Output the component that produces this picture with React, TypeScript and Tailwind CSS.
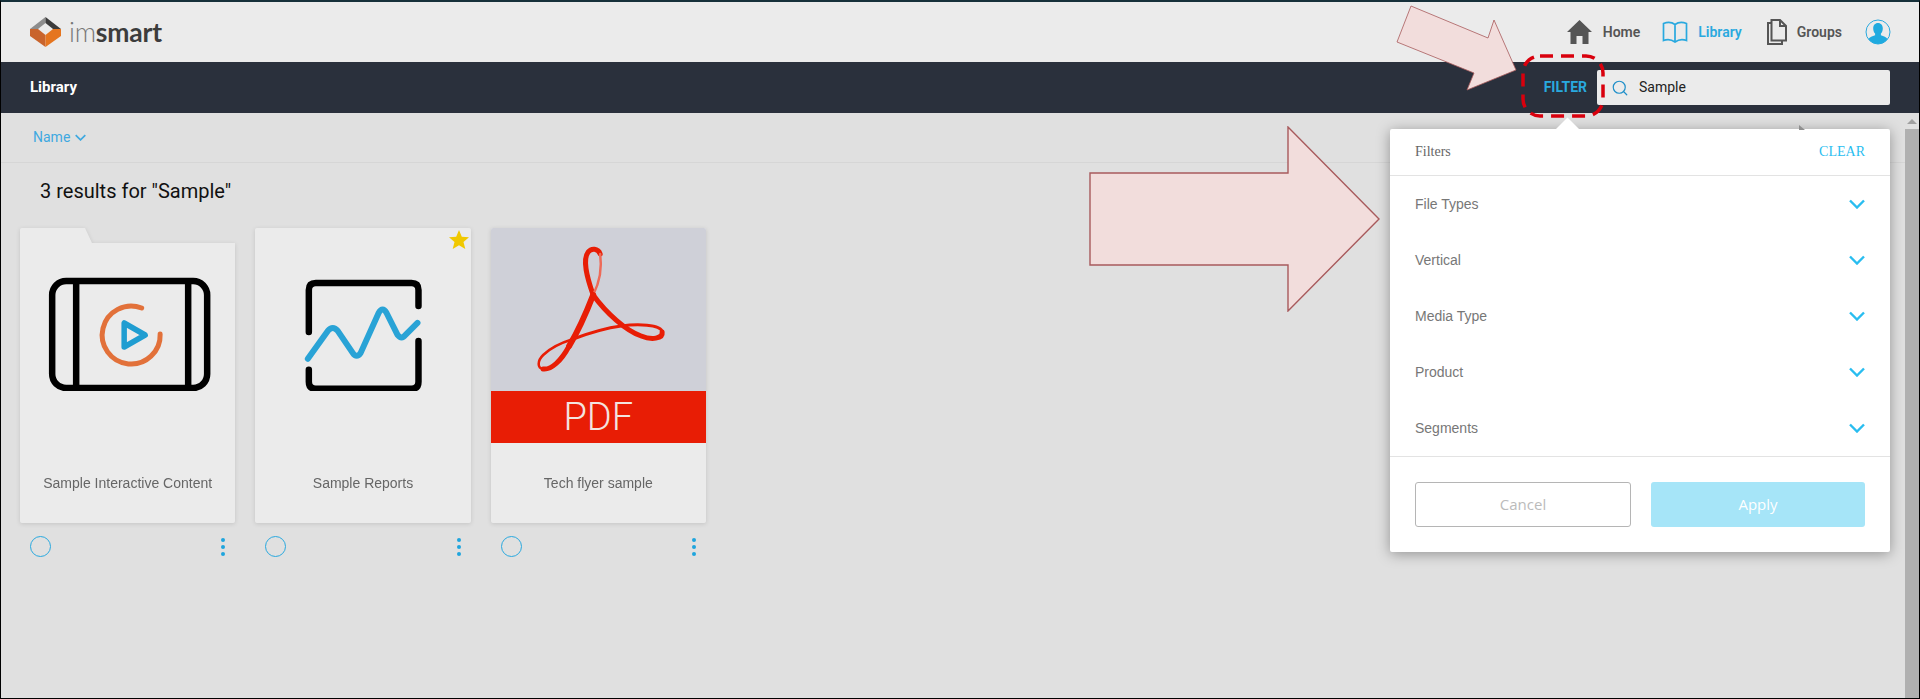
import { Search } from "lucide-react";

const filterRows = ["File Types", "Vertical", "Media Type", "Product", "Segments"];

function Chevron({ className }: { className: string }) {
  return (
    <svg viewBox="0 0 16 10" className={className} fill="none" stroke="currentColor" strokeWidth="2.4">
      <path d="M1 1.5l7 7 7-7" />
    </svg>
  );
}

function Logo() {
  return (
    <div className="flex items-center gap-[8px]">
      <svg viewBox="0 0 31 30" className="h-[30px] w-[31px]">
        <path d="M0 12 15.5 0v6L8 12l-8 0z" fill="#8d8d8d" />
        <path d="M31 12 15.5 0v6L23 12z" fill="#3b3b3b" />
        <path d="M0 12 8 12 15.5 18v12L0 19z" fill="#c9642c" />
        <path d="M31 12 23 12 15.5 18v12L31 19z" fill="#e5751f" />
      </svg>
      <div className="font-['Lato',sans-serif] text-[26.5px] leading-none tracking-[-0.2px] text-[#3c3c3c]">
        <span className="font-light text-[#777]">im</span>
        <span className="font-bold">smart</span>
      </div>
    </div>
  );
}

function NavBar() {
  return (
    <div className="flex h-[60px] items-center justify-between bg-[#ebebeb] pl-[29px] pr-[28px]">
      <Logo />
      <nav className="flex items-center font-['Roboto',sans-serif] text-[14px] font-semibold text-[#555]">
        <svg viewBox="0 0 25 24" className="h-[24px] w-[25px]" fill="#555">
          <path d="M12.5 0 25 12h-3.500v12h-6v-8h-6v8h-6V12H0z" />
        </svg>
        <span className="ml-[11px]">Home</span>
        <svg viewBox="0 0 25 22" className="ml-[22px] h-[22px] w-[26px]" fill="none" stroke="#29a9df" strokeWidth="1.700">
          <path d="M1 2.500C5 1 9 1 12.500 3.500 16 1 20 1 24 2.500v17c-4-1.500-8-1-11.500 1.500C9 18.500 5 18 1 19.500zM12.500 3.500v17.500" />
        </svg>
        <span className="ml-[10px] text-[#29a9df]">Library</span>
        <svg viewBox="0 0 20 26" className="ml-[25px] h-[26px] w-[20px]" fill="none" stroke="#555" strokeWidth="2">
          <path d="M4.500 1h8.500l6 6v14.500h-14.500zM13 1v6h6M4.500 4H1v21h14v-3.500" />
        </svg>
        <span className="ml-[10px]">Groups</span>
        <svg viewBox="0 0 26 26" className="ml-[23px] h-[26px] w-[26px]">
          <circle cx="13" cy="13" r="12" fill="none" stroke="#29a9df" strokeWidth="1" />
          <path d="M13 4c3 0 4.800 2.400 4.800 5.400 0 2.200-.8 4-1.900 5.100v1.800c2.800 1 5.500 2 6.600 3.800A12 12 0 0 1 13 25a12 12 0 0 1-9.500-4.900c1.100-1.800 3.800-2.800 6.600-3.800v-1.800C9 13.400 8.200 11.600 8.200 9.400 8.200 6.400 10 4 13 4z" fill="#1faadf" />
        </svg>
      </nav>
    </div>
  );
}

function LibraryBar() {
  return (
    <div className="flex h-[51px] items-center justify-between bg-[#2a303c] pl-[29px] pr-[29px] font-['Roboto',sans-serif] text-[14px]">
      <span className="text-[15px] font-bold text-white">Library</span>
      <div className="flex items-center">
        <span className="font-bold text-[#29a9df]">FILTER</span>
        <div className="ml-[10px] flex h-[35px] w-[293px] items-center rounded-[2px] bg-[#ebebeb] pl-[14px] text-[#222]">
          <Search size={18} strokeWidth={1.600} className="text-[#1e8fc9]" />
          <span className="ml-[10px]">Sample</span>
        </div>
      </div>
    </div>
  );
}

function InteractiveIcon() {
  return (
    <svg viewBox="0 0 215 163" className="h-[163px] w-full" fill="none">
      <rect x="32" y="53" width="155" height="107" rx="14" stroke="#000" strokeWidth="6.500" />
      <path d="M56 50v113M168 50v113" stroke="#000" strokeWidth="6.500" />
      <path d="M121.500 80A29 29 0 1 0 140 106" stroke="#e2713a" strokeWidth="5" strokeLinecap="round" />
      <path d="M104 95v24l21-12z" stroke="#1f9dd1" strokeWidth="5.500" strokeLinejoin="round" />
    </svg>
  );
}

function ReportsIcon() {
  return (
    <svg viewBox="0 0 216 163" className="h-[163px] w-full" fill="none" strokeLinecap="round" strokeLinejoin="round">
      <path d="M54 104V62q0-7 7-7h96q7 0 7 7v16M164 113v41q0 7-7 7H61q-7 0-7-7v-12" stroke="#000" strokeWidth="6.500" />
      <path d="M53 131l20-28q5-6 10 0l15 22q4 6 8 0l18-40q4-7 8 0l11 22q4 5 8 0l12-12" stroke="#29a3d6" strokeWidth="6" />
    </svg>
  );
}

function PdfThumb() {
  return (
    <div>
      <svg viewBox="0 0 215 163" className="h-[163px] w-full bg-[#cfd0d8]" fill="none" stroke="#e81d05" strokeLinecap="round">
        <path d="M102 67C96 50 91 32 97 24c3-4 10-4 12 2" strokeWidth="5" />
        <path d="M109 26c2 14-1 29-7 41" strokeWidth="2.500" stroke="#ee6a58" />
        <path d="M102 67c-7 18-15 36-24 51" strokeWidth="6" />
        <path d="M78 118c-8 15-18 24-26 23" strokeWidth="5" />
        <path d="M52 141c-6-1-6-8 0-14 6-6 14-11 30-16" strokeWidth="2.500" />
        <path d="M82 111c16-6 33-11 48-13 15-2 40-2 41 6" strokeWidth="3" />
        <path d="M171 104c1 7-11 8-21 4-15-5-35-23-48-41" strokeWidth="5" />
      </svg>
      <div className="flex h-[52px] items-center justify-center bg-[#e81d05] font-['Roboto',sans-serif] text-[38px] leading-none font-light text-[#f3e4e0]">
        PDF
      </div>
    </div>
  );
}

function Card({ label, folder, star, children }: { label: string; folder?: boolean; star?: boolean; children: React.ReactNode }) {
  return (
    <div className="w-[215.330px]">
      <div className="drop-shadow-[0_1px_2px_rgba(0,0,0,0.12)]">
        <div
          className={
            folder
              ? "relative h-[295px] overflow-hidden rounded-[2px] bg-[#ebebeb] [clip-path:polygon(0_0,65px_0,72px_15px,100%_15px,100%_100%,0_100%)]"
              : "relative h-[295px] overflow-hidden rounded-[2px] bg-[#ebebeb]"
          }
        >
          {children}
          {star && (
            <svg viewBox="0 0 20 20" className="absolute top-[2px] right-[2px] h-[20px] w-[20px]" fill="#f0c800">
              <path d="M10 0l2.800 6.800 7.200.5-5.500 4.700 1.800 7L10 15.200 3.700 19l1.800-7L0 7.300l7.200-.5z" />
            </svg>
          )}
          <div className="absolute inset-x-0 top-[247px] text-center font-['Liberation_Sans',sans-serif] text-[14px] leading-4 text-[#666]">
            {label}
          </div>
        </div>
      </div>
      <div className="mt-[13px] flex items-center justify-between pr-[10px] pl-[10px]">
        <div className="h-[21px] w-[21px] rounded-full border border-[#29a9df]" />
        <div className="flex flex-col gap-[3px]">
          <div className="h-[4px] w-[4px] rounded-full bg-[#1fa5dd]" />
          <div className="h-[4px] w-[4px] rounded-full bg-[#1fa5dd]" />
          <div className="h-[4px] w-[4px] rounded-full bg-[#1fa5dd]" />
        </div>
      </div>
    </div>
  );
}

function FilterPanel() {
  return (
    <div className="absolute top-[127px] left-[1389px] w-[500px] rounded-[2px] bg-white shadow-[0_2px_14px_rgba(0,0,0,0.35)]">
      <div className="absolute -top-[8px] left-[169px] h-[17px] w-[17px] rotate-45 bg-white" />
      <div className="relative flex h-[47px] items-center justify-between border-b border-[#e3e3e3] px-[25px] pb-[2px] font-['Liberation_Serif',serif] text-[14px]">
        <span className="text-[#666]">Filters</span>
        <span className="text-[#29bdf0]">CLEAR</span>
      </div>
      <div className="h-[281px] border-b border-[#e3e3e3]">
        {filterRows.map((row) => (
          <div key={row} className="flex h-[56px] items-center justify-between px-[25px] font-['Liberation_Sans',sans-serif] text-[14px] text-[#777]">
            <span>{row}</span>
            <Chevron className="h-[10px] w-[16px] text-[#29bdf0]" />
          </div>
        ))}
      </div>
      <div className="flex justify-between px-[25px] pt-[25px] pb-[25px] font-['Open_Sans',sans-serif] text-[15px]">
        <button className="h-[45px] w-[216px] rounded-[3px] border border-[#b5b5b5] text-[#bbb]">Cancel</button>
        <button className="h-[45px] w-[214px] rounded-[3px] bg-[#a6e5f8] text-white">Apply</button>
      </div>
    </div>
  );
}

function Annotations() {
  return (
    <>
      {/* callout arrows and dashed ring, drawn on top of the screenshot */}
      <svg viewBox="0 0 160 100" className="absolute -top-[2px] left-[1380px] h-[100px] w-[160px]" fill="#f2dddc" stroke="#a85a5c" strokeWidth="0.800">
        <path d="M30 6l77 32 6-18 22 50-49 20 7-17-77-31z" />
      </svg>
      <svg viewBox="0 0 292 186" className="absolute top-[124px] left-[1088px] h-[186px] w-[292px]" fill="#f2dddc" stroke="#a85a5c" strokeWidth="1.400">
        <path d="M1 47h198V1l91 92-91 92v-46H1z" />
      </svg>
      <svg viewBox="0 0 84 64" className="absolute top-[52px] left-[1520px] h-[64px] w-[84px]" fill="none" stroke="#d9000d" strokeWidth="3.500" strokeDasharray="13 8">
        <rect x="2" y="2" width="80" height="60" rx="17" />
      </svg>
      <svg viewBox="0 0 6 5" className="absolute top-[123px] left-[1798px] h-[5px] w-[6px]" fill="#8f8f8f">
        <path d="M0 0l6 5H0z" />
      </svg>
    </>
  );
}

export default function App() {
  return (
    <div className="relative h-[699px] overflow-hidden border-t-2 border-r border-b border-l border-t-[#16303a] border-r-black border-b-black border-l-black bg-[#e0e0e0]">
      <NavBar />
      <LibraryBar />
      <div className="flex h-[586px]">
        <main className="min-w-0 flex-1">
          <div className="flex h-[50px] items-center gap-[5px] border-b border-[#d6d6d6] pl-[32px] font-['Roboto',sans-serif] text-[14px] text-[#3fa9e0]">
            Name
            <Chevron className="h-[7px] w-[11px]" />
          </div>
          <h1 className="mt-[16px] pl-[39px] font-['Roboto',sans-serif] text-[20px] leading-6 font-normal text-[#111]">
            3 results for "Sample"
          </h1>
          <div className="mt-[25px] flex gap-[20px] pl-[19px]">
            <Card label="Sample Interactive Content" folder>
              <InteractiveIcon />
            </Card>
            <Card label="Sample Reports" star>
              <ReportsIcon />
            </Card>
            <Card label="Tech flyer sample">
              <PdfThumb />
            </Card>
          </div>
        </main>
        <div className="flex w-[14px] flex-col">
          <div className="flex h-[16px] items-center justify-center">
            <div className="h-0 w-0 border-x-[5px] border-b-[5px] border-x-transparent border-b-[#a0a0a0]" />
          </div>
          <div className="flex-1 bg-[#b0b0b0]" />
        </div>
      </div>
      <FilterPanel />
      <Annotations />
    </div>
  );
}
